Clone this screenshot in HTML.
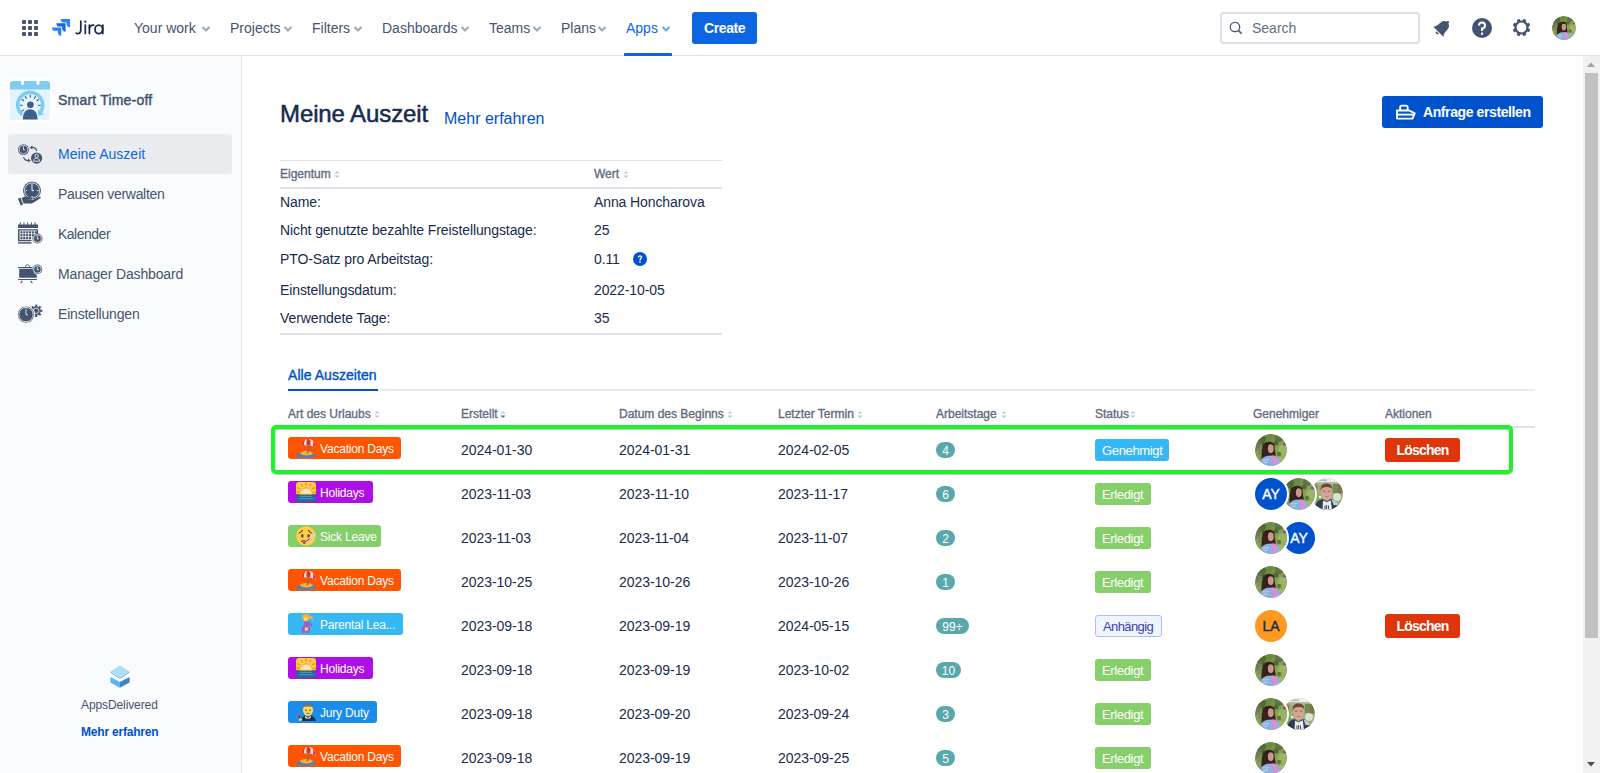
<!DOCTYPE html>
<html><head><meta charset="utf-8">
<style>
*{box-sizing:border-box;margin:0;padding:0}
html,body{width:1600px;height:773px;overflow:hidden;background:#fff;font-family:"Liberation Sans",sans-serif;color:#172b4d}
.a{position:absolute;white-space:nowrap;line-height:1}
#hdr{position:absolute;left:0;top:0;width:1600px;height:56px;background:#fff;border-bottom:1px solid #dcdfe4}
.nav{font-size:14px;color:#44546f;top:21px}
.chev{position:absolute;top:25.5px;width:8px;height:6px;overflow:visible}
#side{position:absolute;left:0;top:56px;width:242px;height:717px;background:#fafbfc;border-right:1px solid #e4e6ea}
.si{font-size:14px;color:#44546f}
.sb{position:absolute;top:56px;left:1583px;width:17px;height:717px;background:#f1f1f1}
.badge{height:22px;border-radius:3px;color:#fff;font-size:12px;overflow:hidden}
.badge .em{position:absolute;left:8px;top:1px}
.badge span{position:absolute;left:32px;top:6px;letter-spacing:-0.2px}
.num{height:16px;border-radius:8px;background:#58a8ac;color:#fff;font-size:12px;text-align:center;line-height:18px}
.st{height:22px;border-radius:3px;color:#fff;font-size:13px;padding:5px 0 0 7px;letter-spacing:-0.35px}
.av{width:32px;height:32px;border-radius:50%;box-shadow:0 0 0 2px #fff;overflow:hidden;font-size:14px;text-align:center;line-height:32px}
.av svg{display:block}
.del{width:75px;height:24px;border-radius:3px;background:#de350b;color:#fff;font-size:14px;font-weight:bold;text-align:center;line-height:24px;letter-spacing:-0.8px}
</style></head><body>
<div id="hdr">
  <!-- grid icon -->
  <svg class="a" style="left:22px;top:20px" width="16" height="16" viewBox="0 0 16 16" fill="#44546f">
    <rect x="0" y="0" width="4" height="4" rx="1"/><rect x="6" y="0" width="4" height="4" rx="1"/><rect x="12" y="0" width="4" height="4" rx="1"/>
    <rect x="0" y="6" width="4" height="4" rx="1"/><rect x="6" y="6" width="4" height="4" rx="1"/><rect x="12" y="6" width="4" height="4" rx="1"/>
    <rect x="0" y="12" width="4" height="4" rx="1"/><rect x="6" y="12" width="4" height="4" rx="1"/><rect x="12" y="12" width="4" height="4" rx="1"/>
  </svg>
  <!-- jira logo -->
  <svg class="a" style="left:52px;top:18px" width="19" height="19" viewBox="0 0 19 19">
    <defs><linearGradient id="jg" x1="0" y1="0" x2="1" y2="1"><stop offset="0" stop-color="#0052cc"/><stop offset="1" stop-color="#2684ff"/></linearGradient></defs>
    <path d="M8.7 1 H18 V9.5 C16.5 9.5 15 8.6 14.6 6.5 V4.4 H10.5 C9.5 4.4 8.9 2.6 8.7 1Z" fill="#2684ff"/>
    <path d="M4.3 5.2 H13.6 V13.7 C12.1 13.7 10.6 12.8 10.2 10.7 V8.6 H6.1 C5.1 8.6 4.5 6.8 4.3 5.2Z" fill="#1868db"/>
    <path d="M0 9.4 H9.3 V18 C7.8 18 6.3 17 5.9 15 V12.8 H1.8 C0.8 12.8 0.2 11 0 9.4Z" fill="#2684ff"/>
  </svg>
  <svg class="a" style="left:74px;top:19px" width="32" height="17" viewBox="0 0 32 17"><g stroke="#172b4d" stroke-width="1.75" fill="none" stroke-linecap="round"><path d="M6.8 2.2 V10.8 C6.8 13.6 5.5 14.6 3.8 14.6 C2.8 14.6 2.4 14.3 2.2 14.1"/><path d="M11.3 6.2 V14.6"/><path d="M15.4 6.2 V14.6"/><path d="M15.5 9 C15.9 6.9 17.5 6.1 19.6 6.2"/><path d="M28.8 6.2 V14.6"/><ellipse cx="24.8" cy="10.4" rx="3.8" ry="4.2"/></g><circle cx="11.3" cy="2.7" r="1.15" fill="#172b4d"/></svg>

  <div class="a nav" style="left:134px">Your work</div>
  <svg class="chev" style="left:202px" viewBox="0 0 8 6"><path d="M1.1 1.4 L4 4.4 L6.9 1.4" stroke="#a0a8b6" stroke-width="2.1" fill="none" stroke-linecap="round"/></svg>
  <div class="a nav" style="left:230px">Projects</div>
  <svg class="chev" style="left:284px" viewBox="0 0 8 6"><path d="M1.1 1.4 L4 4.4 L6.9 1.4" stroke="#a0a8b6" stroke-width="2.1" fill="none" stroke-linecap="round"/></svg>
  <div class="a nav" style="left:312px">Filters</div>
  <svg class="chev" style="left:354px" viewBox="0 0 8 6"><path d="M1.1 1.4 L4 4.4 L6.9 1.4" stroke="#a0a8b6" stroke-width="2.1" fill="none" stroke-linecap="round"/></svg>
  <div class="a nav" style="left:382px">Dashboards</div>
  <svg class="chev" style="left:461px" viewBox="0 0 8 6"><path d="M1.1 1.4 L4 4.4 L6.9 1.4" stroke="#a0a8b6" stroke-width="2.1" fill="none" stroke-linecap="round"/></svg>
  <div class="a nav" style="left:489px">Teams</div>
  <svg class="chev" style="left:533px" viewBox="0 0 8 6"><path d="M1.1 1.4 L4 4.4 L6.9 1.4" stroke="#a0a8b6" stroke-width="2.1" fill="none" stroke-linecap="round"/></svg>
  <div class="a nav" style="left:561px">Plans</div>
  <svg class="chev" style="left:598px" viewBox="0 0 8 6"><path d="M1.1 1.4 L4 4.4 L6.9 1.4" stroke="#a0a8b6" stroke-width="2.1" fill="none" stroke-linecap="round"/></svg>
  <div class="a nav" style="left:626px;color:#0c66e4">Apps</div>
  <svg class="chev" style="left:662px" viewBox="0 0 8 6"><path d="M1.1 1.4 L4 4.4 L6.9 1.4" stroke="#6ea6f5" stroke-width="2.1" fill="none" stroke-linecap="round"/></svg>
  <div class="a" style="left:624px;top:53px;width:48px;height:3px;background:#0c66e4;border-radius:1px 1px 0 0"></div>

  <div class="a" style="left:692px;top:12px;width:65px;height:32px;background:#0c66e4;border-radius:3px"></div>
  <div class="a" style="left:704px;top:21px;font-size:14px;font-weight:bold;color:#fff;letter-spacing:-0.4px">Create</div>

  <!-- search -->
  <div class="a" style="left:1220px;top:12px;width:200px;height:32px;border:2px solid #dcdfe4;border-radius:4px;background:#fff"></div>
  <svg class="a" style="left:1229px;top:21px" width="14" height="14" viewBox="0 0 14 14"><circle cx="6" cy="6" r="4.7" stroke="#44546f" stroke-width="1.3" fill="none"/><path d="M9.4 9.4 L12.6 12.6" stroke="#44546f" stroke-width="1.5"/></svg>
  <div class="a" style="left:1252px;top:21px;font-size:14px;color:#626f86">Search</div>

  <!-- bell -->
  <svg class="a" style="left:1432px;top:18px" width="20" height="20" viewBox="0 0 20 20"><g transform="rotate(45 10 10)" fill="#44546f"><path d="M2.6 15.2 C4 14 4.6 12.5 4.8 10.5 L5.2 6.5 C5.6 3.6 7.5 2.2 10 2.2 C12.5 2.2 14.4 3.6 14.8 6.5 L15.2 10.5 C15.4 12.5 16 14 17.4 15.2Z"/><rect x="8.8" y="0.6" width="2.4" height="2.4" rx="1"/><path d="M8.2 16.3 A1.8 1.8 0 0 0 11.8 16.3Z"/></g></svg>
  <!-- help -->
  <svg class="a" style="left:1472px;top:18px" width="20" height="20" viewBox="0 0 20 20"><circle cx="10" cy="10" r="10" fill="#44546f"/><path d="M7 7.4 A3 3 0 1 1 10 10.4 V13" stroke="#fff" stroke-width="2" fill="none"/><rect x="9" y="14.6" width="2" height="2.2" fill="#fff"/></svg>
  <!-- gear -->
  <svg class="a" style="left:1512px;top:18px" width="19" height="19" viewBox="0 0 19 19"><g transform="translate(9.5 9.5)" fill="#44546f"><circle r="7.1"/><rect x="-1.6" y="-8.8" width="3.2" height="3.5" rx="0.8" transform="rotate(22.5)"/><rect x="-1.6" y="-8.8" width="3.2" height="3.5" rx="0.8" transform="rotate(67.5)"/><rect x="-1.6" y="-8.8" width="3.2" height="3.5" rx="0.8" transform="rotate(112.5)"/><rect x="-1.6" y="-8.8" width="3.2" height="3.5" rx="0.8" transform="rotate(157.5)"/><rect x="-1.6" y="-8.8" width="3.2" height="3.5" rx="0.8" transform="rotate(202.5)"/><rect x="-1.6" y="-8.8" width="3.2" height="3.5" rx="0.8" transform="rotate(247.5)"/><rect x="-1.6" y="-8.8" width="3.2" height="3.5" rx="0.8" transform="rotate(292.5)"/><rect x="-1.6" y="-8.8" width="3.2" height="3.5" rx="0.8" transform="rotate(337.5)"/></g><circle cx="9.5" cy="9.5" r="4.9" fill="#fff"/></svg>
  <!-- avatar -->
  <div class="a" style="left:1552px;top:16px;width:24px;height:24px;border-radius:50%;overflow:hidden"><svg width="24" height="24" viewBox="0 0 32 32"><use href="#woman"/></svg></div>
</div>

<div id="side">

  <!-- app icon -->
  <div class="a" style="left:8px;top:22px;width:44px;height:44px;background:#fff;border-radius:6px"></div>
  <svg class="a" style="left:10px;top:25px" width="40" height="39" viewBox="0 0 40 39">
    <rect x="0" y="0" width="40" height="39" rx="3" fill="#e5f4fc"/>
    <path d="M0 3 A3 3 0 0 1 3 0 H37 A3 3 0 0 1 40 3 V8.5 H0Z" fill="#7ecdf0"/>
    <rect x="11" y="-1" width="3" height="5" rx="1.5" fill="#fff"/><rect x="26.5" y="-1" width="3" height="5" rx="1.5" fill="#fff"/>
    <path d="M12.44 33.83 A12.6 12.6 0 1 1 30.77 30.76" stroke="#7ecdf0" stroke-width="3.4" fill="none"/>
    <path d="M28 28.2 L28.2 34.8 L34.2 33.5Z" fill="#7ecdf0"/>
    <g stroke="#3d5f8a" stroke-width="1.1" stroke-linecap="round"><path d="M12.30 24.30 L10.10 24.30"/><path d="M13.75 19.71 L11.94 18.45"/><path d="M16.30 17.37 L15.20 15.47"/><path d="M20.30 16.30 L20.30 14.10"/><path d="M24.30 17.37 L25.40 15.47"/><path d="M26.85 19.71 L28.66 18.45"/><path d="M28.30 24.30 L30.50 24.30"/><path d="M13.75 28.89 L11.94 30.15"/></g>
    <circle cx="20.4" cy="23.7" r="3.3" fill="#3d5f8a"/>
    <path d="M12.8 38.6 C12.8 32 15.8 28.3 20.2 28.3 C24.6 28.3 27.6 32 27.6 38.6Z" fill="#3d5f8a"/>
  </svg>
  <div class="a" style="left:58px;top:37px;font-size:14px;color:#44546f;letter-spacing:0.2px;-webkit-text-stroke:0.45px #44546f">Smart Time-off</div>

  <div class="a" style="left:8px;top:78px;width:224px;height:40px;background:#ebecf0;border-radius:3px"></div>
  <!-- meine auszeit icon -->
  <svg class="a" style="left:17px;top:87px" width="26" height="22" viewBox="0 0 26 22" fill="#44546f">
    <circle cx="6.5" cy="6.6" r="5.4"/>
    <g stroke="#ebecf0" stroke-width="0.8" fill="none"><circle cx="6.5" cy="6.6" r="4.3"/><path d="M6.5 3.3 V7 H8.3"/></g>
    <circle cx="19.6" cy="15.1" r="5.6"/>
    <g stroke="#ebecf0" stroke-width="0.9" fill="none"><circle cx="19.6" cy="12.9" r="1.7"/><path d="M16.6 18.2 C16.8 15.9 18 15.2 19.6 15.2 C21.2 15.2 22.4 15.9 22.6 18.2Z"/></g>
    <path d="M14.6 4.4 C17.5 4.3 19.3 5.6 19.8 8.2" stroke="#44546f" stroke-width="1.15" fill="none"/>
    <path d="M15.3 2.4 L15.3 6.4 L12.6 4.4Z"/>
    <path d="M6.6 13.8 C7 16.3 8.8 17.5 11.6 17.5" stroke="#44546f" stroke-width="1.15" fill="none"/>
    <path d="M11.1 15.5 L11.1 19.5 L13.8 17.5Z"/>
  </svg>
  <div class="a si" style="left:58px;top:91px;color:#0c66e4">Meine Auszeit</div>

  <!-- pausen verwalten -->
  <svg class="a" style="left:18px;top:125px" width="24" height="25" viewBox="0 0 24 25" fill="#44546f">
    <circle cx="14" cy="9.5" r="9"/>
    <g stroke="#fafbfc" stroke-width="0.8" fill="none"><circle cx="14" cy="9.5" r="7.6"/></g>
    <g stroke="#fafbfc" stroke-width="1" stroke-linecap="round"><path d="M14 3.2 V9.6 H15.6"/><path d="M8 9.6 H8.6"/><path d="M19.4 9.6 H20"/><path d="M14 15.4 V16"/></g>
    <path d="M0 17.5 L2.3 16.5 L5 23.5 L2.7 24.5Z"/>
    <path d="M3.5 17.3 C5.5 15.5 7.5 15 10 15.8 L13.5 16.6 C14.6 16.9 14.6 18.3 13.5 18.4 L9.5 18.6 L14.5 18.9 L21.5 15.8 C22.5 15.4 23.3 16.6 22.4 17.3 L15.3 21.8 C13.5 22.8 11.5 22.6 9 22.5 L5.6 22.6Z"/>
  </svg>
  <div class="a si" style="left:58px;top:131px;letter-spacing:-0.3px">Pausen verwalten</div>

  <!-- kalender -->
  <svg class="a" style="left:17px;top:166px" width="26" height="23" viewBox="0 0 26 23" fill="#44546f">
    <g stroke="#44546f" stroke-width="1" stroke-linecap="round"><path d="M3.3 0.8 V3"/><path d="M7 0.8 V3"/><path d="M10.7 0.8 V3"/><path d="M14.4 0.8 V3"/><path d="M18.1 0.8 V3"/></g>
    <path d="M1 2.5 H21 V6 H1Z"/>
    <path d="M1 7.2 H21 V14 H19.5 V8.6 H2.5 V17.8 H14.5 V19.2 H1Z"/>
    <g><rect x="3.40" y="9.3" width="2.1" height="2.1"/><rect x="6.25" y="9.3" width="2.1" height="2.1"/><rect x="9.10" y="9.3" width="2.1" height="2.1"/><rect x="11.95" y="9.3" width="2.1" height="2.1"/><rect x="14.80" y="9.3" width="2.1" height="2.1"/><rect x="17.65" y="9.3" width="2.1" height="2.1"/><rect x="3.40" y="12.1" width="2.1" height="2.1"/><rect x="6.25" y="12.1" width="2.1" height="2.1"/><rect x="9.10" y="12.1" width="2.1" height="2.1"/><rect x="11.95" y="12.1" width="2.1" height="2.1"/><rect x="14.80" y="12.1" width="2.1" height="2.1"/><rect x="3.40" y="14.9" width="2.1" height="2.1"/><rect x="6.25" y="14.9" width="2.1" height="2.1"/><rect x="9.10" y="14.9" width="2.1" height="2.1"/><rect x="11.95" y="14.9" width="2.1" height="2.1"/></g>
    <path d="M1 20.2 H14.5 V21.6 H1Z"/>
    <circle cx="20.4" cy="16.5" r="5"/>
    <g stroke="#fafbfc" stroke-width="0.8" fill="none"><circle cx="20.4" cy="16.5" r="4"/><path d="M20.4 13.6 V17 H22"/></g>
  </svg>
  <div class="a si" style="left:58px;top:171px;letter-spacing:-0.5px">Kalender</div>

  <!-- manager dashboard -->
  <svg class="a" style="left:17px;top:207px" width="26" height="21" viewBox="0 0 26 21" fill="#44546f">
    <path d="M8.3 3.9 C8.3 2.5 9.2 1.9 10.4 1.9 C11.6 1.9 12.5 2.5 12.5 3.9" stroke="#44546f" stroke-width="0.9" fill="none"/>
    <rect x="1" y="3.9" width="14.5" height="1.3" rx="0.6"/>
    <path d="M2.2 6 H15.5 C16 9.2 17.5 11.3 19.8 11.8 V14.8 H2.2Z"/>
    <rect x="1" y="15.9" width="19" height="1.2" rx="0.6"/>
    <path d="M5 18.2 L4 19.8" stroke="#44546f" stroke-width="1.2" stroke-linecap="round"/><path d="M14 18.2 L15 19.8" stroke="#44546f" stroke-width="1.2" stroke-linecap="round"/>
    <circle cx="20.4" cy="6.4" r="4.9"/>
    <g stroke="#fafbfc" stroke-width="0.8" fill="none"><circle cx="20.4" cy="6.4" r="3.9"/><path d="M20.4 3.6 V6.8 H22"/></g>
  </svg>
  <div class="a si" style="left:58px;top:211px;letter-spacing:-0.15px">Manager Dashboard</div>

  <!-- einstellungen -->
  <svg class="a" style="left:17px;top:247px" width="26" height="24" viewBox="0 0 26 24" fill="#44546f">
    <g transform="translate(19.2 7.8)">
      <circle r="4.6"/>
      <g><rect x="-1" y="-6.2" width="2" height="2.5"/><rect x="-1" y="3.7" width="2" height="2.5"/><rect x="-6.2" y="-1" width="2.5" height="2"/><rect x="3.7" y="-1" width="2.5" height="2"/>
      <g transform="rotate(45)"><rect x="-1" y="-6.2" width="2" height="2.5"/><rect x="-1" y="3.7" width="2" height="2.5"/><rect x="-6.2" y="-1" width="2.5" height="2"/><rect x="3.7" y="-1" width="2.5" height="2"/></g></g>
      <circle r="2.7" fill="none" stroke="#fafbfc" stroke-width="0.8"/><circle r="1.2"/>
    </g>
    <circle cx="9" cy="11.6" r="8.6" stroke="#fafbfc" stroke-width="1"/>
    <g stroke="#fafbfc" stroke-width="0.8" fill="none"><circle cx="9" cy="11.6" r="7.2"/><path d="M9 5.6 V11.8 H11"/></g>
  </svg>
  <div class="a si" style="left:58px;top:251px;letter-spacing:-0.2px">Einstellungen</div>

  <!-- apps delivered -->
  <svg class="a" style="left:110px;top:609px" width="20" height="23" viewBox="0 0 20 23">
    <path d="M0.4 6.4 L9.9 12.8 L19.6 6.4 L19.6 7.4 L9.9 13.8 L0.4 7.4Z" fill="#5aa9e0"/>
    <path d="M9.9 0.2 L19.6 6.4 L9.9 12.8 L0.4 6.4Z" fill="#aee0f8"/>
    <path d="M0.4 12 L9.9 16.9 L9.9 22.7 L0.4 17.5Z" fill="#5cb3ea"/>
    <path d="M19.6 12 L9.9 16.9 L9.9 22.7 L19.6 17.5Z" fill="#3f84c8"/>
  </svg>
  <div class="a" style="left:81px;top:643px;font-size:12px;color:#44546f;letter-spacing:-0.1px">AppsDelivered</div>
  <div class="a" style="left:81px;top:669.6px;font-size:12px;font-weight:bold;color:#0052cc;letter-spacing:-0.2px">Mehr erfahren</div>

</div>

<div id="main">
<div class="a" style="left:280px;top:101.98px;font-size:24px;color:#172b4d;letter-spacing:-0.1px;-webkit-text-stroke:0.5px #172b4d">Meine Auszeit</div>
<div class="a" style="left:444px;top:111.2px;font-size:16px;color:#0052cc">Mehr erfahren</div>
<div class="a" style="left:1382px;top:96px;width:161px;height:32px;background:#0052cc;border-radius:3px"></div>
<svg class="a" style="left:1395px;top:104px" width="22" height="16" viewBox="0 0 22 16"><g stroke="#fff" stroke-width="1.9" fill="none" stroke-linejoin="round"><path d="M5.2 6.5 V3.2 C5.2 2.2 5.9 1.6 6.8 1.6 H11 C11.9 1.6 12.6 2.2 12.6 3.2 V6.5"/><path d="M2 6.5 H14.2 L19.8 9.4 L17.4 14.6 H2Z"/><path d="M2 10.6 H18.6"/></g></svg>
<div class="a" style="left:1423px;top:104.95px;font-size:14px;color:#fff;font-weight:bold;letter-spacing:-0.4px">Anfrage erstellen</div>
<div class="a" style="left:280px;top:160px;width:442px;height:1px;background:#dfe1e6"></div>
<div class="a" style="left:280px;top:187px;width:442px;height:2px;background:#dfe1e6"></div>
<div class="a" style="left:280px;top:333px;width:442px;height:2px;background:#dfe1e6"></div>
<div class="a" style="left:280px;top:167.84px;font-size:12px;color:#5e6c84;-webkit-text-stroke:0.35px #5e6c84">Eigentum</div>
<svg class="a" style="left:334px;top:170px" width="6" height="9" viewBox="0 0 6 9"><path d="M0.5 3.6 L3 1 L5.5 3.6Z" fill="#c1c7d0"/><path d="M0.5 5.4 L3 8 L5.5 5.4Z" fill="#c1c7d0"/></svg>
<div class="a" style="left:594px;top:167.84px;font-size:12px;color:#5e6c84;-webkit-text-stroke:0.35px #5e6c84">Wert</div>
<svg class="a" style="left:623px;top:170px" width="6" height="9" viewBox="0 0 6 9"><path d="M0.5 3.6 L3 1 L5.5 3.6Z" fill="#c1c7d0"/><path d="M0.5 5.4 L3 8 L5.5 5.4Z" fill="#c1c7d0"/></svg>
<div class="a" style="left:280px;top:195.15px;font-size:14px;color:#172b4d;letter-spacing:-0.1px">Name:</div>
<div class="a" style="left:594px;top:195.15px;font-size:14px;color:#172b4d;letter-spacing:-0.1px">Anna Honcharova</div>
<div class="a" style="left:280px;top:223.15px;font-size:14px;color:#172b4d;letter-spacing:-0.1px">Nicht genutzte bezahlte Freistellungstage:</div>
<div class="a" style="left:594px;top:223.15px;font-size:14px;color:#172b4d;letter-spacing:-0.1px">25</div>
<div class="a" style="left:280px;top:252.15px;font-size:14px;color:#172b4d;letter-spacing:-0.1px">PTO-Satz pro Arbeitstag:</div>
<div class="a" style="left:594px;top:252.15px;font-size:14px;color:#172b4d;letter-spacing:-0.1px">0.11</div>
<div class="a" style="left:280px;top:283.15px;font-size:14px;color:#172b4d;letter-spacing:-0.1px">Einstellungsdatum:</div>
<div class="a" style="left:594px;top:283.15px;font-size:14px;color:#172b4d;letter-spacing:-0.1px">2022-10-05</div>
<div class="a" style="left:280px;top:311.15px;font-size:14px;color:#172b4d;letter-spacing:-0.1px">Verwendete Tage:</div>
<div class="a" style="left:594px;top:311.15px;font-size:14px;color:#172b4d;letter-spacing:-0.1px">35</div>
<svg class="a" style="left:633px;top:252px" width="14" height="14" viewBox="0 0 14 14"><circle cx="7" cy="7" r="7" fill="#0052cc"/><path d="M4.9 5.4 C4.9 4.1 5.8 3.3 7 3.3 C8.3 3.3 9.2 4.1 9.2 5.3 C9.2 6.7 7.7 6.9 7.7 8.2 V8.5 H6.4 V8 C6.4 6.3 7.9 6.2 7.9 5.3 C7.9 4.9 7.5 4.5 7 4.5 C6.5 4.5 6.2 4.9 6.2 5.4Z" fill="#fff"/><rect x="6.3" y="9.3" width="1.4" height="1.4" fill="#fff"/></svg>
<div class="a" style="left:288px;top:368.15px;font-size:14px;color:#0052cc;-webkit-text-stroke:0.4px #0052cc;letter-spacing:0.05px">Alle Auszeiten</div>
<div class="a" style="left:288px;top:389px;width:1247px;height:2px;background:#ebecf0"></div>
<div class="a" style="left:288px;top:389px;width:90px;height:2px;background:#0052cc"></div>
<div class="a" style="left:288px;top:407.84px;font-size:12px;color:#5e6c84;-webkit-text-stroke:0.35px #5e6c84">Art des Urlaubs</div>
<svg class="a" style="left:374px;top:410px" width="6" height="9" viewBox="0 0 6 9"><path d="M0.5 3.6 L3 1 L5.5 3.6Z" fill="#c1c7d0"/><path d="M0.5 5.4 L3 8 L5.5 5.4Z" fill="#c1c7d0"/></svg>
<div class="a" style="left:461px;top:407.84px;font-size:12px;color:#5e6c84;-webkit-text-stroke:0.35px #5e6c84">Erstellt</div>
<svg class="a" style="left:500px;top:410px" width="6" height="9" viewBox="0 0 6 9"><path d="M0.5 3.6 L3 1 L5.5 3.6Z" fill="#c1c7d0"/><path d="M0.5 5.4 L3 8 L5.5 5.4Z" fill="#5e6c84"/></svg>
<div class="a" style="left:619px;top:407.84px;font-size:12px;color:#5e6c84;-webkit-text-stroke:0.35px #5e6c84">Datum des Beginns</div>
<svg class="a" style="left:727px;top:410px" width="6" height="9" viewBox="0 0 6 9"><path d="M0.5 3.6 L3 1 L5.5 3.6Z" fill="#c1c7d0"/><path d="M0.5 5.4 L3 8 L5.5 5.4Z" fill="#c1c7d0"/></svg>
<div class="a" style="left:778px;top:407.84px;font-size:12px;color:#5e6c84;-webkit-text-stroke:0.35px #5e6c84">Letzter Termin</div>
<svg class="a" style="left:857px;top:410px" width="6" height="9" viewBox="0 0 6 9"><path d="M0.5 3.6 L3 1 L5.5 3.6Z" fill="#c1c7d0"/><path d="M0.5 5.4 L3 8 L5.5 5.4Z" fill="#c1c7d0"/></svg>
<div class="a" style="left:936px;top:407.84px;font-size:12px;color:#5e6c84;-webkit-text-stroke:0.35px #5e6c84">Arbeitstage</div>
<svg class="a" style="left:1001px;top:410px" width="6" height="9" viewBox="0 0 6 9"><path d="M0.5 3.6 L3 1 L5.5 3.6Z" fill="#c1c7d0"/><path d="M0.5 5.4 L3 8 L5.5 5.4Z" fill="#c1c7d0"/></svg>
<div class="a" style="left:1095px;top:407.84px;font-size:12px;color:#5e6c84;-webkit-text-stroke:0.35px #5e6c84">Status</div>
<svg class="a" style="left:1130px;top:410px" width="6" height="9" viewBox="0 0 6 9"><path d="M0.5 3.6 L3 1 L5.5 3.6Z" fill="#c1c7d0"/><path d="M0.5 5.4 L3 8 L5.5 5.4Z" fill="#c1c7d0"/></svg>
<div class="a" style="left:1253px;top:407.84px;font-size:12px;color:#5e6c84;-webkit-text-stroke:0.35px #5e6c84">Genehmiger</div>
<div class="a" style="left:1385px;top:407.84px;font-size:12px;color:#5e6c84;-webkit-text-stroke:0.35px #5e6c84">Aktionen</div>
<div class="a" style="left:288px;top:426px;width:1247px;height:2px;background:#dfe1e6"></div>
<svg width="0" height="0" style="position:absolute">
<defs>
<clipPath id="cc"><circle cx="16" cy="16" r="16"/></clipPath>
<linearGradient id="wg" x1="0" y1="0" x2="1" y2="1"><stop offset="0" stop-color="#587838"/><stop offset="0.5" stop-color="#7f9d50"/><stop offset="1" stop-color="#a8b878"/></linearGradient>
<linearGradient id="mg" x1="0" y1="0" x2="1" y2="1"><stop offset="0" stop-color="#9a9468"/><stop offset="0.5" stop-color="#8aa06c"/><stop offset="1" stop-color="#c9d2bf"/></linearGradient>
<symbol id="woman" viewBox="0 0 32 32">
 <g clip-path="url(#cc)">
  <rect width="32" height="32" fill="url(#wg)"/>
  <circle cx="6" cy="5" r="5" fill="#4f6c33"/><circle cx="14" cy="3" r="3" fill="#6a8a45"/><circle cx="24" cy="4" r="4" fill="#5a783c"/>
  <circle cx="28" cy="16" r="5" fill="#9ab463"/><circle cx="3" cy="21" r="4" fill="#84a058"/><circle cx="26" cy="27" r="4" fill="#a9b477"/>
  <circle cx="21" cy="9" r="2.5" fill="#4e6a35"/><circle cx="9" cy="11" r="2" fill="#3e5a2a"/><circle cx="24" cy="20" r="2.2" fill="#5c7a3a"/>
  <circle cx="2.5" cy="13" r="1.6" fill="#8a5aa0"/><circle cx="29.5" cy="10" r="1.5" fill="#7e4c98"/><circle cx="5" cy="8" r="1.2" fill="#8a5aa0"/><circle cx="23" cy="3.5" r="1" fill="#8a5aa0"/><circle cx="4" cy="19" r="0.9" fill="#8a5aa0"/>
  <path d="M6.5 25 C6.2 20 6.8 14.5 8.3 11 C10 7.8 12.8 7.3 15.5 7.8 C18.8 8.4 19.8 11 19.6 14.5 L20.8 21.5 L15 26 L9.5 27Z" fill="#35221c"/>
  <ellipse cx="15.8" cy="14.6" rx="2.9" ry="4.6" fill="#c99888"/>
  <path d="M12.6 12 C13.5 10 15.5 9.6 18.6 11 L18.8 9.5 C16.5 8 13.8 8.5 12.6 12Z" fill="#35221c"/>
  <path d="M4.5 32 C5 25.5 8.3 22.3 13 21.8 L18 21.5 C22.5 21.8 25.5 24.5 26 32Z" fill="#8bb2de"/>
  <path d="M15.8 22 L19.5 21.6 L23.2 31 L19.5 32Z" fill="#e68ace"/>
  <path d="M8 26 L14 25.5 M8.5 28.5 L13 28" stroke="#c9dcf2" stroke-width="0.8"/>
 </g>
</symbol>
<symbol id="man" viewBox="0 0 32 32">
 <g clip-path="url(#cc)">
  <rect width="32" height="32" fill="#9aae7c"/>
  <rect x="0" y="0" width="32" height="4.5" fill="#eef0f0"/>
  <rect x="6" y="1.5" width="10" height="1.6" fill="#9cc0dc"/>
  <rect x="0" y="4.5" width="32" height="2.5" fill="#b4ad92"/>
  <rect x="1" y="6" width="5.5" height="11" fill="#a68f5c"/><rect x="3" y="8" width="2.5" height="6" fill="#4a5a50"/>
  <rect x="22" y="6" width="10" height="9" fill="#6f8a52"/><rect x="27" y="7" width="3" height="9" fill="#8a7040"/>
  <circle cx="26" cy="19" r="4" fill="#d8e2cf"/><circle cx="6" cy="21" r="3.5" fill="#7fa860"/><circle cx="9" cy="19" r="1.3" fill="#e8eedd"/>
  <path d="M9.8 13 C9.2 8 11.5 5.6 15.5 5.6 C19.5 5.6 21.6 8 21.2 13 L20.3 10.3 C17.5 9.6 13.5 9.6 11 10.5Z" fill="#6b4a33"/>
  <path d="M10.5 12 C10.5 9.8 12.5 9 15.8 9 C19 9 20.8 9.8 20.8 12 L20.8 16 C20.8 19.5 18.5 21.8 15.6 21.8 C12.8 21.8 10.5 19.5 10.5 16Z" fill="#d3a592"/>
  <path d="M12 13.2 H14.5 M16.8 13.2 H19.3" stroke="#7a5040" stroke-width="0.8"/>
  <path d="M14 18.5 H17.3" stroke="#b77868" stroke-width="0.9"/>
  <path d="M3 32 C3.5 26 7 22 11.5 21 L15.6 23.5 L20 21 C25 22 28.5 26 29 32Z" fill="#2f3b50"/>
  <path d="M20.5 21.3 C24.5 22.3 26.8 24.5 27.5 27.5 L22.5 27Z" fill="#c6c9c6"/>
  <path d="M12 22.5 L15.6 24.3 L19.8 22.3 L21 32 L11.5 32Z" fill="#e9eaf0"/>
  <path d="M14 27.5 V31 M15.6 27 V31 M17.5 27.5 V31" stroke="#3a3d45" stroke-width="0.9"/>
 </g>
</symbol>
<symbol id="e-umb" viewBox="0 0 20 20">
 <ellipse cx="10" cy="17.2" rx="10" ry="2.6" fill="#3b88c3"/>
 <ellipse cx="10.5" cy="15.3" rx="6.3" ry="2.2" fill="#ffac33"/>
 <path d="M13.2 8.5 L11.2 15.5" stroke="#66757f" stroke-width="1.4"/>
 <path d="M5.2 6.8 C6.5 2.5 10 0.5 13.7 1 C17.5 1.8 19.8 5.5 19.4 9.6 C17.5 8.3 15 7.6 12.6 7.6 C10 7.6 7.3 6.8 5.2 6.8Z" fill="#ffe8b6"/>
 <path d="M5.2 6.8 C6 4.2 7.5 2.5 9.2 1.8 C8.3 3.5 7.8 5.4 7.9 7.2Z M11 1 C13.5 0.5 14.3 2 14.6 3.5 L14.3 7.8 C12.5 7.5 11.3 7.5 10.6 7.6 C10.3 5 10.5 2.5 11 1Z M17 2.8 C18.8 4.5 19.6 7 19.4 9.6 C18.6 9 17.8 8.6 17 8.3 C17.3 6.5 17.3 4.6 17 2.8Z" fill="#dd2e44"/>
</symbol>
<symbol id="e-sun" viewBox="0 0 20 20">
 <path d="M3 0 H17 A3 3 0 0 1 20 3 V12.3 H0 V3 A3 3 0 0 1 3 0Z" fill="#ffcc4d"/>
 <path d="M0 12.3 H20 V17 A3 3 0 0 1 17 20 H3 A3 3 0 0 1 0 17Z" fill="#2a6797"/>
 <g stroke="#f4900c" stroke-width="1.4" stroke-linecap="round"><path d="M10 1.2 V2.8"/><path d="M5.3 2.5 L6.1 3.9"/><path d="M14.7 2.5 L13.9 3.9"/><path d="M2 5.8 L3.4 6.6"/><path d="M18 5.8 L16.6 6.6"/><path d="M0.9 10.2 H2.4"/><path d="M19.1 10.2 H17.6"/></g>
 <path d="M3.6 12.3 A6.4 6.4 0 0 1 16.4 12.3Z" fill="#ffe8b6" stroke="#f4900c" stroke-width="0.8"/>
 <g stroke="#55acee" stroke-width="0.7" fill="none"><path d="M4 14.5 Q5 13.8 6 14.5 Q7 15.2 8 14.5 Q9 13.8 10 14.5 Q11 15.2 12 14.5 Q13 13.8 14 14.5 Q15 15.2 16 14.5"/><path d="M3 16.8 Q4 16.1 5 16.8 Q6 17.5 7 16.8 Q8 16.1 9 16.8 Q10 17.5 11 16.8 Q12 16.1 13 16.8 Q14 17.5 15 16.8 Q16 16.1 17 16.8"/></g>
</symbol>
<symbol id="e-sick" viewBox="0 0 20 20">
 <circle cx="10" cy="10" r="9.8" fill="#ffcc4d"/>
 <g stroke="#664500" stroke-width="1.1" fill="none" stroke-linecap="round"><path d="M3.2 7 C4.5 6.5 5.8 5.5 6.5 4.3"/><path d="M12.3 4.3 C13 5.5 14.3 6.5 15.6 7"/></g>
 <ellipse cx="6.3" cy="9.8" rx="1.2" ry="1.9" fill="#664500"/><ellipse cx="12.6" cy="9.8" rx="1.2" ry="1.9" fill="#664500"/>
 <path d="M5.5 15.5 C7 14.5 8.5 14.3 10 14.8" stroke="#664500" stroke-width="1.1" fill="none" stroke-linecap="round"/>
 <path d="M8 17 L18.6 8.6" stroke="#ccd6dd" stroke-width="2.6" stroke-linecap="round"/>
 <path d="M8.1 16.9 L13.5 12.6" stroke="#dd2e44" stroke-width="1.1" stroke-linecap="round"/>
 <circle cx="8.2" cy="16.8" r="1.3" fill="#dd2e44"/>
</symbol>
<symbol id="e-preg" viewBox="0 0 20 20">
 <path d="M6.2 3.2 C6 1.2 7.6 0 9.8 0 C12 0 13.5 1 14 2.5 C14.8 1.6 16.2 1.8 16.5 3.2 C16.7 4.5 16.5 5.8 17.6 6.8 C16 6.8 15.2 5.5 15.3 4 C14.6 4.8 14 5.2 13 5.2 L7.2 5.5 C6.6 4.8 6.3 4 6.2 3.2Z" fill="#ffac33"/>
 <path d="M7.6 3.5 C8.5 3 10.5 3 11.8 3.8 L11.4 7.8 C10.5 8.2 9.2 8 8.4 7.2 C7.8 6 7.5 4.8 7.6 3.5Z" fill="#ffdc5d"/>
 <path d="M8.2 7.4 C9.5 6.8 11.5 6.8 13 7.6 C14.5 8.5 16.2 10 16.9 11.8 C15.8 12.3 14.8 12 14 11.5 C14.2 13 14 15 13.8 16.5 L13.8 19 H6 C5.3 17.5 5 15.5 5.6 13.6 C6.3 12.4 7.6 11.8 8 10.6 C8 9.5 7.9 8.4 8.2 7.4Z" fill="#9266cc"/>
 <path d="M8.8 13.6 H12.2 L11.8 16.2 C11 17 9.5 17 8.9 16.2Z" fill="#ffcc4d"/>
</symbol>
<symbol id="e-judge" viewBox="0 0 20 20">
 <path d="M7 5.8 C6.6 2.5 8.8 1 12 1 C15.2 1 17.4 2.5 17 5.8 L16.5 5 C14 4.3 10 4.3 7.5 5Z" fill="#66757f"/>
 <path d="M7.5 5 C10 4.3 14 4.3 16.5 5 L16.9 7.5 C17.6 7.6 17.6 9 16.8 9.2 C16.4 11.8 14.5 13.8 12 13.8 C9.5 13.8 7.6 11.8 7.2 9.2 C6.4 9 6.4 7.6 7.1 7.5Z" fill="#ffdc5d"/>
 <ellipse cx="10" cy="8.2" rx="0.9" ry="0.6" fill="#662113"/><ellipse cx="14.2" cy="8.2" rx="0.9" ry="0.6" fill="#662113"/>
 <path d="M11.4 10 H12.8" stroke="#c1694f" stroke-width="0.8"/>
 <path d="M10 11.4 H14.2" stroke="#7a7a6a" stroke-width="0.9"/>
 <path d="M4.6 19 C5 16 7 14.2 9 13.8 L12 15.5 L15 13.8 C17.5 14.3 19.5 16 19.9 19Z" fill="#292f33"/>
 <path d="M8.8 13.8 L12 16 L14.8 13.8 L14.4 16.2 L12 17 L9.3 16.2Z" fill="#e1e8ed"/>
 <circle cx="12" cy="16.6" r="0.7" fill="#3b88c3"/>
 <path d="M0.6 12.5 L3.8 11.2 L4.3 12.6 L1.1 13.9Z" fill="#bf6952"/><path d="M3 13 L3.6 16.5" stroke="#662113" stroke-width="0.9"/>
 <rect x="3" y="16.6" width="3" height="2.2" rx="0.6" fill="#ffdc5d"/>
</symbol>
</defs></svg>
<div class="a badge" style="left:288px;top:437px;width:113px;background:#ff5500"><svg class="em" width="20" height="20"><use href="#e-umb"/></svg><span>Vacation Days</span></div>
<div class="a" style="left:461px;top:443.15px;font-size:14px;color:#172b4d;letter-spacing:-0.05px">2024-01-30</div>
<div class="a" style="left:619px;top:443.15px;font-size:14px;color:#172b4d;letter-spacing:-0.05px">2024-01-31</div>
<div class="a" style="left:778px;top:443.15px;font-size:14px;color:#172b4d;letter-spacing:-0.05px">2024-02-05</div>
<div class="a num" style="left:936px;top:442px;width:19px">4</div>
<div class="a st" style="left:1095px;top:439px;width:74px;background:#36b7f5">Genehmigt</div>
<div class="a av" style="left:1255px;top:434px;z-index:11"><svg width="32" height="32"><use href="#woman"/></svg></div>
<div class="a del" style="left:1385px;top:438px">Löschen</div>
<div class="a badge" style="left:288px;top:481px;width:85px;background:#af0fe6"><svg class="em" width="20" height="20"><use href="#e-sun"/></svg><span>Holidays</span></div>
<div class="a" style="left:461px;top:487.15px;font-size:14px;color:#172b4d;letter-spacing:-0.05px">2023-11-03</div>
<div class="a" style="left:619px;top:487.15px;font-size:14px;color:#172b4d;letter-spacing:-0.05px">2023-11-10</div>
<div class="a" style="left:778px;top:487.15px;font-size:14px;color:#172b4d;letter-spacing:-0.05px">2023-11-17</div>
<div class="a num" style="left:936px;top:486px;width:19px">6</div>
<div class="a st" style="left:1095px;top:483px;width:56px;background:#86cf6b">Erledigt</div>
<div class="a av" style="left:1255px;top:478px;z-index:13;background:#0052cc;color:#fff;-webkit-text-stroke:0.4px #fff">AY</div>
<div class="a av" style="left:1283px;top:478px;z-index:12"><svg width="32" height="32"><use href="#woman"/></svg></div>
<div class="a av" style="left:1311px;top:478px;z-index:11"><svg width="32" height="32"><use href="#man"/></svg></div>
<div class="a badge" style="left:288px;top:525px;width:93px;background:#85cf6a"><svg class="em" width="20" height="20"><use href="#e-sick"/></svg><span>Sick Leave</span></div>
<div class="a" style="left:461px;top:531.15px;font-size:14px;color:#172b4d;letter-spacing:-0.05px">2023-11-03</div>
<div class="a" style="left:619px;top:531.15px;font-size:14px;color:#172b4d;letter-spacing:-0.05px">2023-11-04</div>
<div class="a" style="left:778px;top:531.15px;font-size:14px;color:#172b4d;letter-spacing:-0.05px">2023-11-07</div>
<div class="a num" style="left:936px;top:530px;width:19px">2</div>
<div class="a st" style="left:1095px;top:527px;width:56px;background:#86cf6b">Erledigt</div>
<div class="a av" style="left:1255px;top:522px;z-index:12"><svg width="32" height="32"><use href="#woman"/></svg></div>
<div class="a av" style="left:1283px;top:522px;z-index:11;background:#0052cc;color:#fff;-webkit-text-stroke:0.4px #fff">AY</div>
<div class="a badge" style="left:288px;top:569px;width:113px;background:#ff5500"><svg class="em" width="20" height="20"><use href="#e-umb"/></svg><span>Vacation Days</span></div>
<div class="a" style="left:461px;top:575.15px;font-size:14px;color:#172b4d;letter-spacing:-0.05px">2023-10-25</div>
<div class="a" style="left:619px;top:575.15px;font-size:14px;color:#172b4d;letter-spacing:-0.05px">2023-10-26</div>
<div class="a" style="left:778px;top:575.15px;font-size:14px;color:#172b4d;letter-spacing:-0.05px">2023-10-26</div>
<div class="a num" style="left:936px;top:574px;width:19px">1</div>
<div class="a st" style="left:1095px;top:571px;width:56px;background:#86cf6b">Erledigt</div>
<div class="a av" style="left:1255px;top:566px;z-index:11"><svg width="32" height="32"><use href="#woman"/></svg></div>
<div class="a badge" style="left:288px;top:613px;width:115px;background:#35b8f3"><svg class="em" width="20" height="20"><use href="#e-preg"/></svg><span>Parental Lea...</span></div>
<div class="a" style="left:461px;top:619.15px;font-size:14px;color:#172b4d;letter-spacing:-0.05px">2023-09-18</div>
<div class="a" style="left:619px;top:619.15px;font-size:14px;color:#172b4d;letter-spacing:-0.05px">2023-09-19</div>
<div class="a" style="left:778px;top:619.15px;font-size:14px;color:#172b4d;letter-spacing:-0.05px">2024-05-15</div>
<div class="a num" style="left:936px;top:618px;width:33px">99+</div>
<div class="a st" style="left:1095px;top:615px;width:67px;background:#eff4ff;border:1px solid #a9c1fb;color:#3b3fb6;padding:4px 0 0 7px;letter-spacing:-0.6px">Anhängig</div>
<div class="a av" style="left:1255px;top:610px;z-index:11;background:#ff991f;color:#172b4d;-webkit-text-stroke:0.4px #172b4d">LA</div>
<div class="a del" style="left:1385px;top:614px">Löschen</div>
<div class="a badge" style="left:288px;top:657px;width:85px;background:#af0fe6"><svg class="em" width="20" height="20"><use href="#e-sun"/></svg><span>Holidays</span></div>
<div class="a" style="left:461px;top:663.15px;font-size:14px;color:#172b4d;letter-spacing:-0.05px">2023-09-18</div>
<div class="a" style="left:619px;top:663.15px;font-size:14px;color:#172b4d;letter-spacing:-0.05px">2023-09-19</div>
<div class="a" style="left:778px;top:663.15px;font-size:14px;color:#172b4d;letter-spacing:-0.05px">2023-10-02</div>
<div class="a num" style="left:936px;top:662px;width:25px">10</div>
<div class="a st" style="left:1095px;top:659px;width:56px;background:#86cf6b">Erledigt</div>
<div class="a av" style="left:1255px;top:654px;z-index:11"><svg width="32" height="32"><use href="#woman"/></svg></div>
<div class="a badge" style="left:288px;top:701px;width:89px;background:#1a8ceb"><svg class="em" width="20" height="20"><use href="#e-judge"/></svg><span>Jury Duty</span></div>
<div class="a" style="left:461px;top:707.15px;font-size:14px;color:#172b4d;letter-spacing:-0.05px">2023-09-18</div>
<div class="a" style="left:619px;top:707.15px;font-size:14px;color:#172b4d;letter-spacing:-0.05px">2023-09-20</div>
<div class="a" style="left:778px;top:707.15px;font-size:14px;color:#172b4d;letter-spacing:-0.05px">2023-09-24</div>
<div class="a num" style="left:936px;top:706px;width:19px">3</div>
<div class="a st" style="left:1095px;top:703px;width:56px;background:#86cf6b">Erledigt</div>
<div class="a av" style="left:1255px;top:698px;z-index:12"><svg width="32" height="32"><use href="#woman"/></svg></div>
<div class="a av" style="left:1283px;top:698px;z-index:11"><svg width="32" height="32"><use href="#man"/></svg></div>
<div class="a badge" style="left:288px;top:745px;width:113px;background:#ff5500"><svg class="em" width="20" height="20"><use href="#e-umb"/></svg><span>Vacation Days</span></div>
<div class="a" style="left:461px;top:751.15px;font-size:14px;color:#172b4d;letter-spacing:-0.05px">2023-09-18</div>
<div class="a" style="left:619px;top:751.15px;font-size:14px;color:#172b4d;letter-spacing:-0.05px">2023-09-19</div>
<div class="a" style="left:778px;top:751.15px;font-size:14px;color:#172b4d;letter-spacing:-0.05px">2023-09-25</div>
<div class="a num" style="left:936px;top:750px;width:19px">5</div>
<div class="a st" style="left:1095px;top:747px;width:56px;background:#86cf6b">Erledigt</div>
<div class="a av" style="left:1255px;top:742px;z-index:11"><svg width="32" height="32"><use href="#woman"/></svg></div>
<div class="a" style="left:271px;top:425px;width:1242px;height:49px;border:4px solid #1df22d;border-radius:5px;z-index:30;box-shadow:inset 0 1px 0 rgba(0,0,0,0.22), inset 1px 0 0 rgba(0,0,0,0.12), 0 1px 0 rgba(0,0,0,0.22)"></div>

</div>

<div class="sb">
  <svg class="a" style="left:4px;top:6px" width="8" height="5" viewBox="0 0 8 5"><path d="M0 5 L4 0.5 L8 5Z" fill="#a3a3a3"/></svg>
  <div class="a" style="left:2px;top:17px;width:13px;height:565px;background:#c1c1c1"></div>
  <svg class="a" style="left:4px;top:706px" width="8" height="5" viewBox="0 0 8 5"><path d="M0 0 L4 4.5 L8 0Z" fill="#505050"/></svg>
</div>
</body></html>
